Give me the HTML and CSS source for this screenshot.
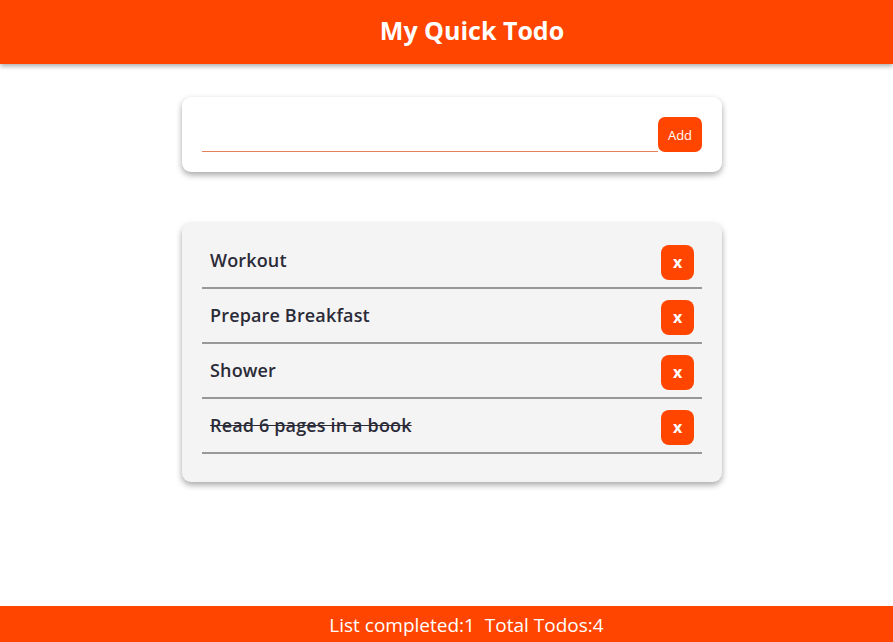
FILE: index.html
```html
<!DOCTYPE html>
<html>
<head>
<meta charset="utf-8">
<title>My Quick Todo</title>
<link rel="stylesheet" href="styles.css">
</head>
<body>
<header class="topbar"><h1 class="title">My Quick Todo</h1></header>
<main class="main">
  <section class="card add-card">
    <input class="new-input" type="text">
    <button class="add-btn">Add</button>
  </section>
  <section class="card list-card">
    <ul class="todo-list">
      <li class="todo"><span class="todo-text">Workout</span><button class="del-btn">x</button></li>
      <li class="todo"><span class="todo-text">Prepare Breakfast</span><button class="del-btn">x</button></li>
      <li class="todo"><span class="todo-text">Shower</span><button class="del-btn">x</button></li>
      <li class="todo"><span class="todo-text done">Read 6 pages in a book</span><button class="del-btn">x</button></li>
    </ul>
  </section>
</main>
<footer class="footer">List completed:1&nbsp; Total Todos:4</footer>
</body>
</html>
```
FILE: styles.css
```css
* { box-sizing: border-box; }
html, body { margin: 0; height: 100%; }
body {
  font-family: "Open Sans", "Noto Sans", sans-serif;
  background: #fff;
  display: flex;
  flex-direction: column;
  min-height: 642px;
}
.topbar {
  background: #ff4500;
  height: 64px;
  display: flex;
  align-items: center;
  justify-content: center;
  box-shadow: 0 2px 5px rgba(0,0,0,0.35);
}
.title {
  margin: 0 0 4px 51px;
  color: #fff;
  font-size: 25px;
  font-weight: 700;
}
.main {
  flex: 1;
  display: flex;
  flex-direction: column;
  align-items: center;
  padding-top: 33px;
  padding-left: 11px;
}
.card {
  width: 540px;
  border-radius: 9px;
  box-shadow: 0 3px 6px rgba(0,0,0,0.35);
}
.add-card {
  background: #fff;
  height: 75px;
  padding: 20px;
  display: flex;
  align-items: flex-end;
}
.new-input {
  flex: 1;
  height: 35px;
  border: none;
  border-bottom: 1px solid #e5805c;
  outline: none;
  background: transparent;
}
.add-btn {
  width: 44px;
  height: 35px;
  background: #ff4500;
  color: #fff;
  border: none;
  border-radius: 7px;
  font-family: "Open Sans", sans-serif;
  font-size: 13px;
  padding: 0;
}
.list-card {
  margin-top: 51px;
  background: #f4f4f4;
  padding: 11px 20px 28px;
}
.todo-list { list-style: none; margin: 0; padding: 0; }
.todo {
  height: 55px;
  border-bottom: 2px solid #989898;
  display: flex;
  align-items: flex-start;
  justify-content: space-between;
  padding: 0 8px;
}
.todo-text {
  padding-top: 14px;
  line-height: 24px;
  font-size: 18px;
  letter-spacing: 0.15px;
  font-weight: 600;
  color: #2b2b38;
}
.todo-text.done { text-decoration: line-through; }
.del-btn {
  margin-top: 11px;
  width: 33px;
  height: 35px;
  background: #ff4500;
  color: #fff;
  border: none;
  border-radius: 8px;
  font-family: "Open Sans", sans-serif;
  font-weight: 700;
  font-size: 16px;
  padding: 0 0 2px;
}
.footer {
  background: #ff4500;
  color: #fff;
  height: 36px;
  display: flex;
  align-items: center;
  justify-content: center;
  font-size: 19px;
  padding: 2px 0 0 40px;
}
```
